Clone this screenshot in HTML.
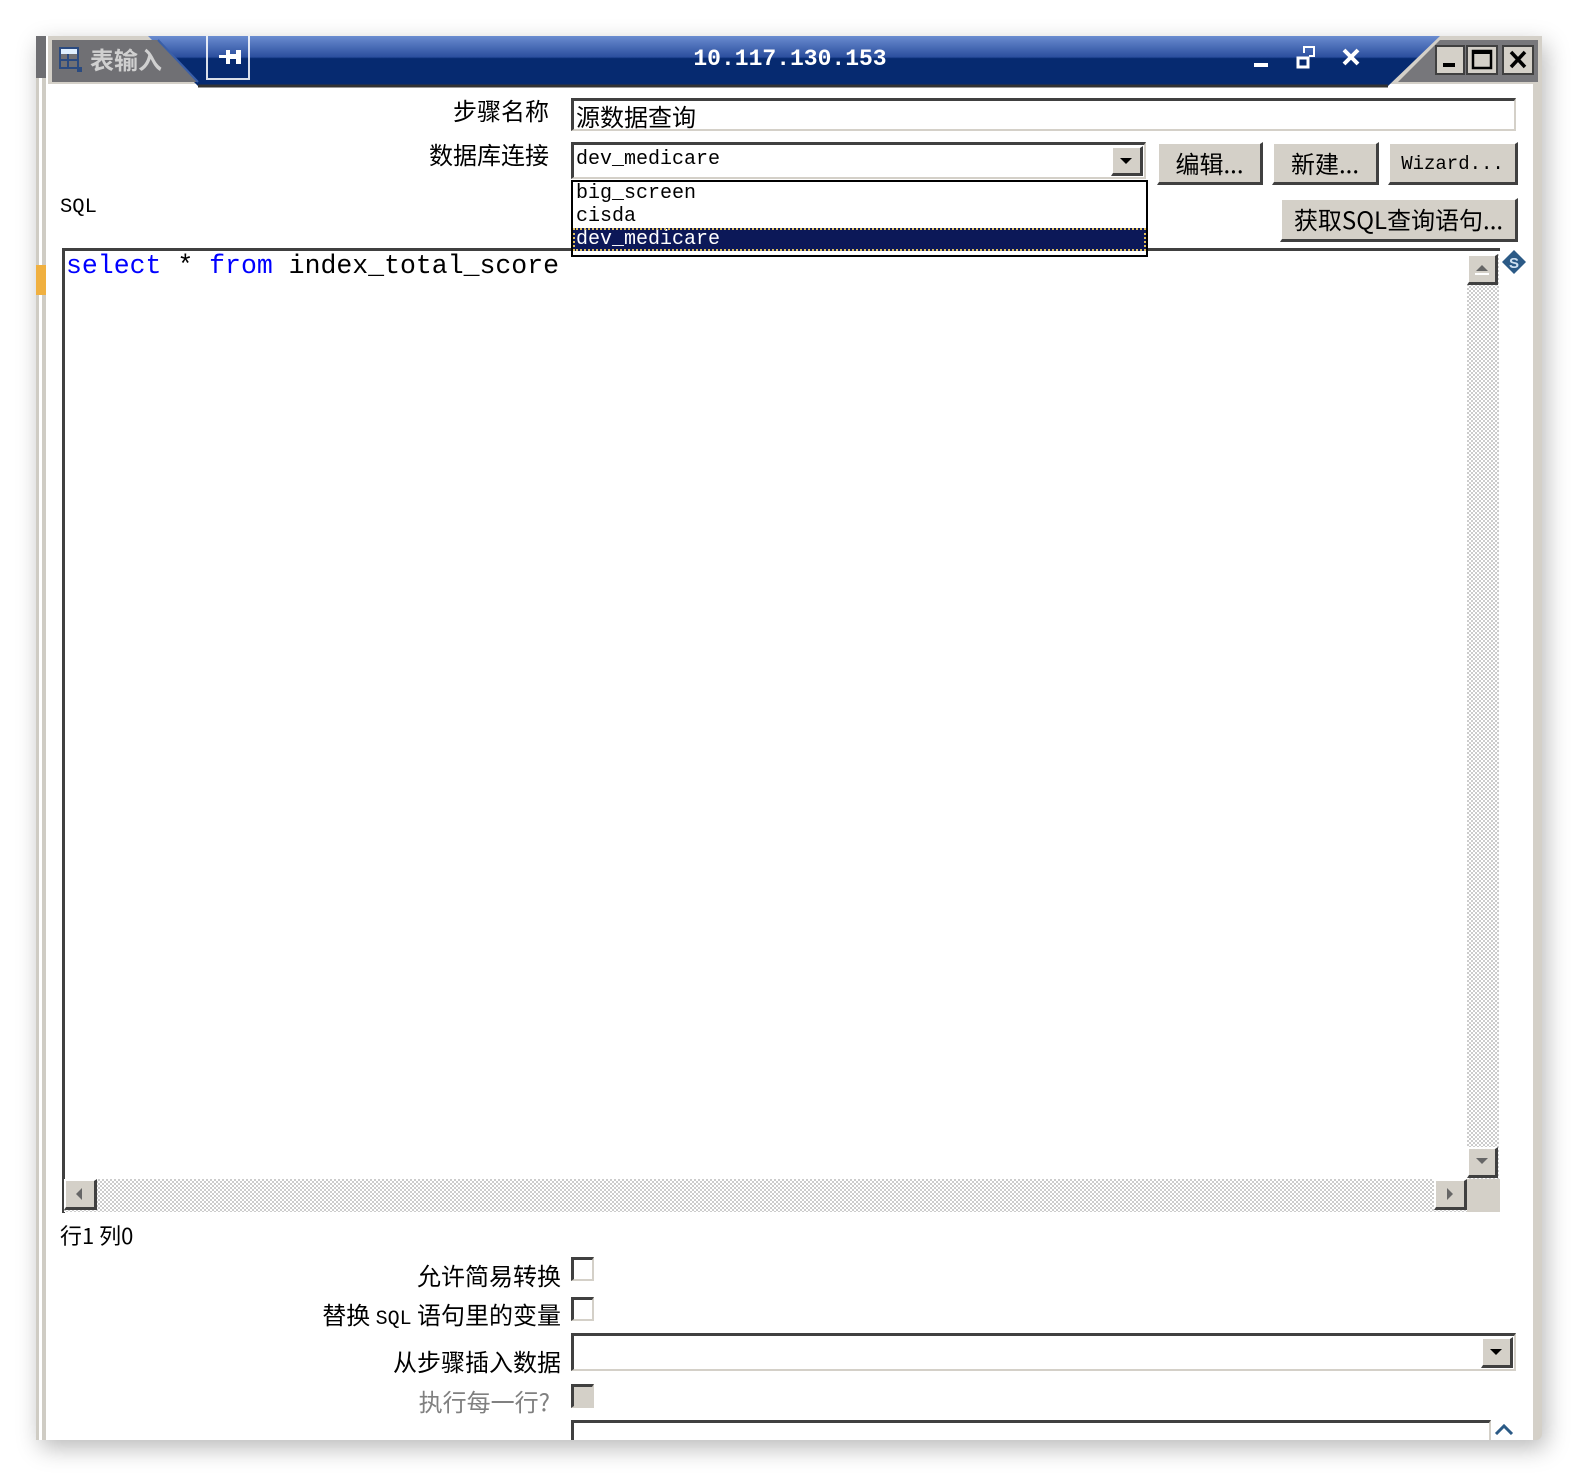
<!DOCTYPE html>
<html><head><meta charset="utf-8"><style>
*{margin:0;padding:0;box-sizing:border-box}
body{width:1578px;height:1478px;background:#fff;position:relative;overflow:hidden;font-family:"Liberation Sans","Noto Sans CJK SC",sans-serif}
.a{position:absolute}
.win{left:36px;top:36px;width:1506px;height:1404px;background:#d4d0c8;box-shadow:4px 8px 24px rgba(0,0,0,.28);border-radius:0 0 6px 6px}
.cn{font-family:"WenQuanYi Zen Hei","Noto Sans CJK SC",sans-serif;font-size:24px;color:#000;white-space:nowrap;line-height:26px}
.mono{font-family:"Liberation Mono",monospace;white-space:nowrap}
.btn{background:#d4d0c8;border-top:2px solid #fff;border-left:2px solid #fff;border-right:3px solid #404040;border-bottom:3px solid #404040;text-align:center}
.inp{background:#fff;border-top:3px solid #404040;border-left:3px solid #404040;border-right:2px solid #d4d0c8;border-bottom:2px solid #d4d0c8}
.chk{width:23px;height:24px;background:#fff;border-top:3px solid #404040;border-left:3px solid #404040;border-right:2px solid #d4d0c8;border-bottom:2px solid #d4d0c8}
.chk.d{background:#d4d0c8}
.r{text-align:right}
.hatch{background-color:#fff;background-image:linear-gradient(45deg,#ccc 25%,transparent 25%,transparent 75%,#ccc 75%),linear-gradient(45deg,#ccc 25%,transparent 25%,transparent 75%,#ccc 75%);background-size:4px 4px;background-position:0 0,2px 2px}
</style></head><body>
<div class="a win"></div>
<div class="a" style="left:36px;top:36px;width:12px;height:1404px;background:#fff"></div>
<div class="a" style="left:36px;top:36px;width:3px;height:1404px;background:#cfccc4"></div>
<div class="a" style="left:42px;top:36px;width:4px;height:1404px;background:#cfccc4"></div>
<div class="a" style="left:36px;top:36px;width:10px;height:42px;background:#6e6e72"></div>
<div class="a" style="left:36px;top:265px;width:10px;height:30px;background:#f0b040"></div>
<div class="a" style="left:48px;top:84px;width:1485px;height:1356px;background:#fff"></div>
<svg class="a" style="left:48px;top:36px" width="1490" height="52">
<defs><linearGradient id="g" x1="0" y1="0" x2="0" y2="1"><stop offset="0" stop-color="#6a8cd0"/><stop offset=".42" stop-color="#2b4f9e"/><stop offset=".45" stop-color="#062a70"/><stop offset="1" stop-color="#062a70"/></linearGradient></defs>
<rect x="0" y="0" width="1490" height="48" fill="#d4d0c8"/>
<polygon points="100,0 1392,0 1340,50 150,50" fill="url(#g)"/>
<line x1="150" y1="50" x2="1340" y2="50" stroke="#333" stroke-width="3"/>
<polygon points="4,4 110,4 150,46 4,46" fill="#707074"/>
<line x1="110" y1="4" x2="150" y2="46" stroke="#3a5fa8" stroke-width="2"/>
<polygon points="1392,4 1490,4 1490,46 1350,46" fill="#77777b"/>
<rect x="12" y="12" width="18" height="20" fill="none" stroke="#2a4a80" stroke-width="2"/>
<rect x="13" y="13" width="16" height="5" fill="#dfefff"/>
<line x1="12" y1="24" x2="30" y2="24" stroke="#2a4a80" stroke-width="2"/>
<line x1="20" y1="18" x2="20" y2="32" stroke="#2a4a80" stroke-width="2"/>
<rect x="29" y="31" width="5" height="5" fill="#2a4a80"/>
<text x="42" y="33" font-family="WenQuanYi Zen Hei,Noto Sans CJK SC,sans-serif" font-size="24" font-weight="bold" fill="#d0d0d0">表输入</text>
<rect x="159" y="-2" width="42" height="45" fill="none" stroke="#fff" stroke-width="2" opacity=".85"/>
<rect x="171" y="19" width="10" height="3" fill="#fff"/><rect x="178" y="14" width="4" height="14" fill="#fff"/><rect x="182" y="18" width="8" height="5" fill="#fff"/><rect x="188" y="14" width="5" height="14" fill="#fff"/>
<text x="742" y="29" text-anchor="middle" font-family="Liberation Mono,monospace" font-size="23" font-weight="bold" fill="#fff">10.117.130.153</text>
<rect x="1206" y="27" width="14" height="4" fill="#fff"/>
<rect x="1250" y="22" width="10" height="9" fill="none" stroke="#fff" stroke-width="3"/>
<path d="M1256 17 V11 H1266 V20 H1261" fill="none" stroke="#fff" stroke-width="2"/>
<path d="M1296 14 L1310 28 M1310 14 L1296 28" stroke="#fff" stroke-width="4"/>
<g>
<rect x="1388" y="10" width="28" height="28" fill="#d4d0c8" stroke="#404040" stroke-width="2"/><rect x="1395" y="27" width="12" height="4" fill="#000"/>
<rect x="1419" y="10" width="30" height="28" fill="#d4d0c8" stroke="#404040" stroke-width="2"/><rect x="1425" y="15" width="18" height="17" fill="none" stroke="#000" stroke-width="2.5"/><rect x="1425" y="15" width="18" height="3" fill="#000"/>
<rect x="1455" y="10" width="30" height="28" fill="#d4d0c8" stroke="#404040" stroke-width="2"/><path d="M1463 16 L1477 31 M1477 16 L1463 31" stroke="#000" stroke-width="3.5"/>
</g>
</svg>
<div class="a cn r" style="left:300px;top:97px;width:249px">步骤名称</div>
<div class="a inp" style="left:571px;top:98px;width:945px;height:33px"><div class="cn" style="padding:2px 0 0 2px">源数据查询</div></div>
<div class="a cn r" style="left:300px;top:141px;width:249px">数据库连接</div>
<div class="a inp" style="left:571px;top:142px;width:575px;height:37px"><div class="mono" style="font-size:20px;padding:3px 0 0 2px">dev_medicare</div>
<div class="a btn" style="right:1px;top:1px;width:32px;height:30px"><svg width="27" height="25"><path d="M7 10 H19 L13 16 Z" fill="#000"/></svg></div></div>
<div class="a btn cn" style="left:1157px;top:142px;width:106px;height:43px;padding-top:6px">编辑...</div>
<div class="a btn cn" style="left:1272px;top:142px;width:107px;height:43px;padding-top:6px">新建...</div>
<div class="a btn mono" style="left:1388px;top:142px;width:130px;height:43px;padding-top:9px;font-size:19px">Wizard...</div>
<div class="a" style="left:60px;top:196px;font-family:'Liberation Mono',monospace;font-size:20.5px">SQL</div>
<div class="a btn cn" style="left:1280px;top:198px;width:238px;height:44px;padding-top:6px">获取SQL查询语句...</div>
<div class="a" style="left:62px;top:248px;width:1438px;height:965px;border-top:3px solid #404040;border-left:3px solid #404040;background:#fff"></div>
<div class="a mono" style="left:66px;top:251px;font-size:26.5px"><span style="color:#00f">select</span> * <span style="color:#00f">from</span> index_total_score</div>
<div class="a hatch" style="left:1467px;top:254px;width:32px;height:926px"></div>
<div class="a btn" style="left:1467px;top:254px;width:31px;height:31px"><svg width="26" height="26"><path d="M7 15 H19 L13 9 Z" fill="#666"/><rect x="6" y="17" width="14" height="2" fill="#fff"/></svg></div>
<div class="a btn" style="left:1467px;top:1147px;width:31px;height:31px"><svg width="26" height="26"><path d="M7 9 H19 L13 15 Z" fill="#666"/></svg></div>
<div class="a hatch" style="left:64px;top:1179px;width:1404px;height:33px"></div>
<div class="a" style="left:1467px;top:1179px;width:33px;height:33px;background:#d4d0c8"></div>
<div class="a btn" style="left:64px;top:1179px;width:33px;height:31px"><svg width="28" height="26"><path d="M16 7 V19 L10 13 Z" fill="#666"/></svg></div>
<div class="a btn" style="left:1434px;top:1179px;width:33px;height:31px"><svg width="28" height="26"><path d="M11 7 V19 L17 13 Z" fill="#666"/></svg></div>
<svg class="a" style="left:1500px;top:249px" width="28" height="28"><path d="M14 1 L26 13 L14 25 L2 13 Z" fill="#2b5a86"/><text x="14" y="19" text-anchor="middle" font-size="15" font-weight="bold" fill="#cfe0f0" font-family="Liberation Sans">S</text></svg>
<div class="a" style="left:571px;top:180px;width:577px;height:77px;background:#fff;border:2px solid #000">
<div class="mono" style="font-size:20px;line-height:23px;padding-left:3px">big_screen</div>
<div class="mono" style="font-size:20px;line-height:23px;padding-left:3px">cisda</div>
<div class="mono" style="font-size:20px;line-height:23px;padding-left:3px;background:#0c1858;color:#fff;outline:2px dotted #e0c060;outline-offset:-2px">dev_medicare</div>
</div>
<div class="a cn" style="left:60px;top:1222px;font-size:22px">行1 列0</div>
<div class="a cn r" style="left:200px;top:1262px;width:361px">允许简易转换</div>
<div class="a chk" style="left:571px;top:1257px"></div>
<div class="a cn r" style="left:200px;top:1301px;width:361px">替换 <span style="font-family:'Liberation Mono',monospace;font-size:20px">SQL</span> 语句里的变量</div>
<div class="a chk" style="left:571px;top:1297px"></div>
<div class="a cn r" style="left:200px;top:1348px;width:361px">从步骤插入数据</div>
<div class="a inp" style="left:571px;top:1333px;width:945px;height:38px"><div class="a btn" style="right:1px;top:1px;width:32px;height:31px"><svg width="27" height="26"><path d="M7 10 H19 L13 16 Z" fill="#000"/></svg></div></div>
<div class="a cn r" style="left:200px;top:1388px;width:350px;color:#808080">执行每一行?</div>
<div class="a chk d" style="left:571px;top:1384px"></div>
<div class="a inp" style="left:571px;top:1420px;width:920px;height:20px;border-bottom:0"></div>
<svg class="a" style="left:1494px;top:1423px" width="20" height="12"><path d="M2 11 L10 3 L18 11" fill="none" stroke="#2b5a86" stroke-width="3"/></svg>
</body></html>
